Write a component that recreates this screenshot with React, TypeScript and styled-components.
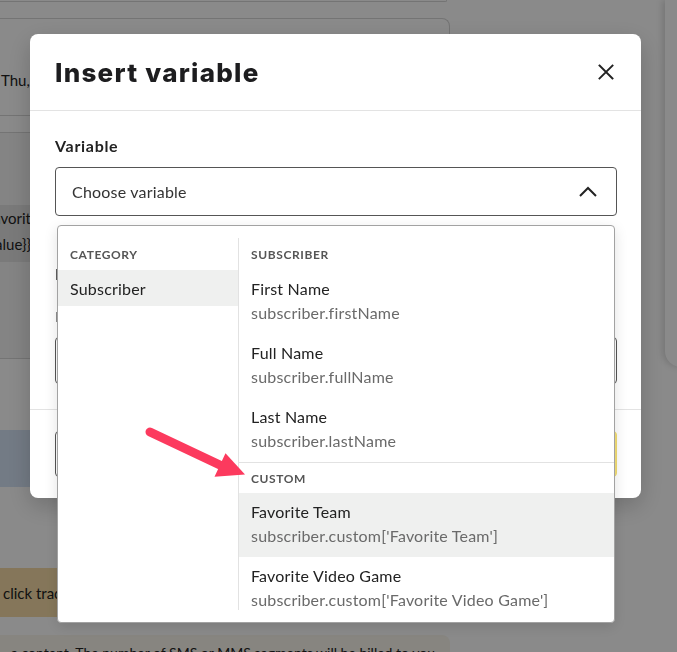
import React from "react";
import styled, { createGlobalStyle } from "styled-components";

const GlobalStyle = createGlobalStyle`
  * { box-sizing: border-box; }
  html, body { margin: 0; padding: 0; }
  body {
    font-family: "Lato", "Noto Sans", sans-serif;
    color: #222;
    background: #fff;
    overflow: hidden;
  }
`;

/* ---------- message feed behind the dialog ---------- */

const Page = styled.div`
  display: flex;
  width: 677px;
  height: 652px;
  overflow: hidden;
  background: #fff;
`;

const Feed = styled.div`
  flex: 0 0 474px;
  min-width: 0;
  margin-left: -24px;
  display: flex;
  flex-direction: column;
  font-size: 15px;

  & > * {
    flex-shrink: 0;
  }
`;

const PrevCard = styled.div`
  height: 2px;
  margin-right: 3px;
  border: 1px solid #d6d6d6;
  border-top: none;
  border-radius: 0 0 8px 8px;
`;

const MessageCard = styled.div`
  margin-top: 16px;
  border: 1px solid #d6d6d6;
  border-bottom: none;
  border-radius: 8px 8px 0 0;
  display: flex;
  flex-direction: column;
`;

const MetaRow = styled.div`
  height: 97px;
  display: flex;
  align-items: flex-end;
  padding: 0 24px 25px;
  line-height: 20px;
  white-space: nowrap;
  border-bottom: 1px solid #d6d6d6;
`;

const TabStrip = styled.div`
  height: 17px;
  border-bottom: 1px solid #d6d6d6;
`;

const PreviewSection = styled.div`
  height: 226px;
  padding-top: 72px;
  background: #f4f4f4;
  border-bottom: 1px solid #d6d6d6;
`;

const CodeBox = styled.div`
  height: 57px;
  background: #e2e2e2;
`;

const CodeLines = styled.div`
  width: 54px;
  display: flex;
  flex-direction: column;
  align-items: flex-end;
  white-space: nowrap;
  line-height: 26px;
  color: #222;
`;

const Gap = styled.div<{ $h: number }>`
  height: ${(p) => p.$h}px;
`;

const NoticeBox = styled.div<{ $tone: "info" | "warn"; $h: number; $inset: number }>`
  height: ${(p) => p.$h}px;
  display: flex;
  align-items: center;
  padding-left: ${(p) => p.$inset}px;
  white-space: nowrap;
  background: ${(p) => (p.$tone === "info" ? "#d5e3f5" : "#f6dba6")};
`;

const FootNote = styled.div`
  height: 40px;
  padding: 8px 0 0 35px;
  line-height: 20px;
  font-size: 14px;
  white-space: nowrap;
  overflow: hidden;
  background: #f9f5ec;
  border-radius: 0 8px 0 0;
`;

const SidePanel = styled.div`
  flex: 0 0 40px;
  height: 367px;
  margin-left: auto;
  margin-right: -28px;
  background: #fff;
  border-radius: 0 0 0 16px;
  box-shadow: -3px 0 6px rgba(0, 0, 0, 0.14);
`;

/* ---------- dialog ---------- */

const Layer = styled.div`
  position: fixed;
  inset: 0;
  display: flex;
  justify-content: center;
  align-items: flex-start;
  padding: 34px 6px 0 0;
  background: rgba(0, 0, 0, 0.46);
`;

const Dialog = styled.div`
  width: 611px;
  background: #fff;
  border-radius: 8px;
  box-shadow: 0 8px 24px rgba(0, 0, 0, 0.2);
  display: flex;
  flex-direction: column;
`;

const DialogHeader = styled.div`
  height: 77px;
  display: flex;
  align-items: center;
  justify-content: space-between;
  padding: 0 27px 0 25px;
  border-bottom: 1px solid #e3e3e3;
`;

const Title = styled.h2`
  margin: 0;
  font-family: "Inter", "Noto Sans", sans-serif;
  font-weight: 800;
  font-size: 26px;
  letter-spacing: 1.25px;
  color: #1d1d1f;
`;

const CloseButton = styled.button`
  width: 16px;
  height: 16px;
  padding: 0;
  border: none;
  background: none;
  display: flex;
  color: #222;
`;

const DialogBody = styled.div`
  padding: 25px 24px 25px 25px;
  display: flex;
  flex-direction: column;
`;

const Label = styled.div`
  font-weight: 700;
  font-size: 16px;
  letter-spacing: 0.7px;
  line-height: 20px;
  color: #222;
`;

const HelpText = styled.div`
  margin-top: 24px;
  font-size: 14px;
  line-height: 18px;
  color: #666;
`;

const SelectWrap = styled.div`
  position: relative;
  margin-top: 11px;
`;

const SelectBox = styled.div`
  height: 49px;
  display: flex;
  align-items: center;
  justify-content: space-between;
  padding: 0 19px 0 16px;
  border: 1px solid #555;
  border-radius: 4px;
  font-size: 16px;
  letter-spacing: 0.2px;
  color: #333;
`;

const SecondField = styled.div`
  margin-top: 48px;
  display: flex;
  flex-direction: column;
`;

const TextInput = styled.div`
  margin-top: 11px;
  height: 47px;
  border: 1px solid #555;
  border-radius: 4px;
`;

const DialogFooter = styled.div`
  display: flex;
  justify-content: space-between;
  padding: 21px 24px 21px 25px;
  border-top: 1px solid #e3e3e3;
`;

const FooterButton = styled.button<{ $primary?: boolean }>`
  height: 46px;
  padding: 0 24px;
  border-radius: 4px;
  font-family: inherit;
  font-size: 15px;
  font-weight: 700;
  color: #222;
  border: 1px solid ${(p) => (p.$primary ? "#f1dc72" : "#555")};
  background: ${(p) => (p.$primary ? "#f7e27a" : "#fff")};
`;

/* ---------- variable picker menu ---------- */

const Menu = styled.div`
  position: absolute;
  top: calc(100% + 9px);
  left: 2px;
  right: 2px;
  height: 398px;
  padding: 12px 0;
  display: flex;
  background: #fff;
  border: 1px solid #a2a2a2;
  border-radius: 4px;
  box-shadow: 0 4px 14px rgba(0, 0, 0, 0.12);
`;

const CategoryColumn = styled.div`
  flex: 0 0 180px;
  display: flex;
  flex-direction: column;
`;

const OptionColumn = styled.div`
  flex: 1;
  border-left: 1px solid #e2e2e2;
  overflow: hidden;
  display: flex;
  flex-direction: column;
`;

const GroupHeading = styled.div<{ $divided?: boolean }>`
  flex: 0 0 auto;
  height: ${(p) => (p.$divided ? 31 : 32)}px;
  display: flex;
  align-items: center;
  padding: 0 12px;
  font-size: 12px;
  font-weight: 700;
  letter-spacing: 0.6px;
  text-transform: uppercase;
  color: #555;
  border-top: ${(p) => (p.$divided ? "1px solid #e2e2e2" : "none")};
`;

const CategoryItem = styled.div<{ $active?: boolean }>`
  height: 36px;
  display: flex;
  align-items: center;
  padding: 0 12px;
  font-size: 16px;
  letter-spacing: 0.2px;
  color: #222;
  background: ${(p) => (p.$active ? "#eff0ef" : "transparent")};
`;

const OptionItem = styled.div<{ $active?: boolean }>`
  flex: 0 0 64px;
  padding: 9px 12px 0;
  display: flex;
  flex-direction: column;
  gap: 4px;
  background: ${(p) => (p.$active ? "#eff0ef" : "transparent")};
`;

const OptionName = styled.div`
  font-size: 16px;
  letter-spacing: 0.2px;
  line-height: 20px;
  color: #222;
`;

const OptionPath = styled.div`
  font-size: 16px;
  letter-spacing: 0.2px;
  line-height: 20px;
  color: #6a6a6a;
  white-space: nowrap;
`;

const Callout = styled.svg`
  position: fixed;
  left: 140px;
  top: 420px;
  width: 115px;
  height: 65px;
  overflow: visible;
`;

type Option = { name: string; path: string; active?: boolean };

const subscriberOptions: Option[] = [
  { name: "First Name", path: "subscriber.firstName" },
  { name: "Full Name", path: "subscriber.fullName" },
  { name: "Last Name", path: "subscriber.lastName" },
];

const customOptions: Option[] = [
  { name: "Favorite Team", path: "subscriber.custom['Favorite Team']", active: true },
  { name: "Favorite Video Game", path: "subscriber.custom['Favorite Video Game']" },
];

const codeLines = ["Hey! Your {{subscriber.custom['Favorit", "| default: value}}"];

const CloseIcon = () => (
  <svg width="16" height="16" viewBox="0 0 16 16" fill="none" stroke="currentColor" strokeWidth="1.9" strokeLinecap="square">
    <path d="M1.5 1.5L14.5 14.5M14.5 1.5L1.5 14.5" />
  </svg>
);

const ChevronUp = () => (
  <svg width="18" height="11" viewBox="0 0 18 11" fill="none" stroke="#222" strokeWidth="2">
    <path d="M1 10L9 2L17 10" />
  </svg>
);

export default function App() {
  return (
    <>
      <GlobalStyle />
      <Page>
        <Feed>
          <PrevCard />
          <MessageCard>
            <MetaRow>Thu, Mar 14 at 10:24 AM</MetaRow>
            <TabStrip />
            <PreviewSection>
              <CodeBox>
                <CodeLines>
                  {codeLines.map((l) => (
                    <span key={l}>{l}</span>
                  ))}
                </CodeLines>
              </CodeBox>
            </PreviewSection>
          </MessageCard>
          <Gap $h={71} />
          <NoticeBox $tone="info" $h={57} $inset={72}>
            Links are shortened automatically.
          </NoticeBox>
          <Gap $h={81} />
          <NoticeBox $tone="warn" $h={49} $inset={27}>
            click tracking is enabled for this message
          </NoticeBox>
          <Gap $h={18} />
          <FootNote>a content. The number of SMS or MMS segments will be billed to you.</FootNote>
        </Feed>
        <SidePanel />
      </Page>

      <Layer>
        <Dialog>
          <DialogHeader>
            <Title>Insert variable</Title>
            <CloseButton aria-label="Close">
              <CloseIcon />
            </CloseButton>
          </DialogHeader>

          <DialogBody>
            <Label>Variable</Label>
            <SelectWrap>
              <SelectBox>
                <span>Choose variable</span>
                <ChevronUp />
              </SelectBox>

              <Menu>
                <CategoryColumn>
                  <GroupHeading>Category</GroupHeading>
                  <CategoryItem $active>Subscriber</CategoryItem>
                </CategoryColumn>
                <OptionColumn>
                  <GroupHeading>Subscriber</GroupHeading>
                  {subscriberOptions.map((o) => (
                    <OptionItem key={o.path}>
                      <OptionName>{o.name}</OptionName>
                      <OptionPath>{o.path}</OptionPath>
                    </OptionItem>
                  ))}
                  <GroupHeading $divided>Custom</GroupHeading>
                  {customOptions.map((o) => (
                    <OptionItem key={o.path} $active={o.active}>
                      <OptionName>{o.name}</OptionName>
                      <OptionPath>{o.path}</OptionPath>
                    </OptionItem>
                  ))}
                </OptionColumn>
              </Menu>
            </SelectWrap>

            <SecondField>
              <Label>Fallback value</Label>
              <HelpText>Fallback used when no value exists</HelpText>
              <TextInput />
            </SecondField>
          </DialogBody>

          <DialogFooter>
            <FooterButton>Cancel</FooterButton>
            <FooterButton $primary>Insert</FooterButton>
          </DialogFooter>
        </Dialog>
      </Layer>

      <Callout viewBox="0 0 115 65">
        <path d="M10 12L82 46" stroke="#fc3a5e" strokeWidth="9" strokeLinecap="round" fill="none" />
        <polygon points="85.5,33.2 105,54.5 74.5,56.8" fill="#fc3a5e" />
      </Callout>
    </>
  );
}
